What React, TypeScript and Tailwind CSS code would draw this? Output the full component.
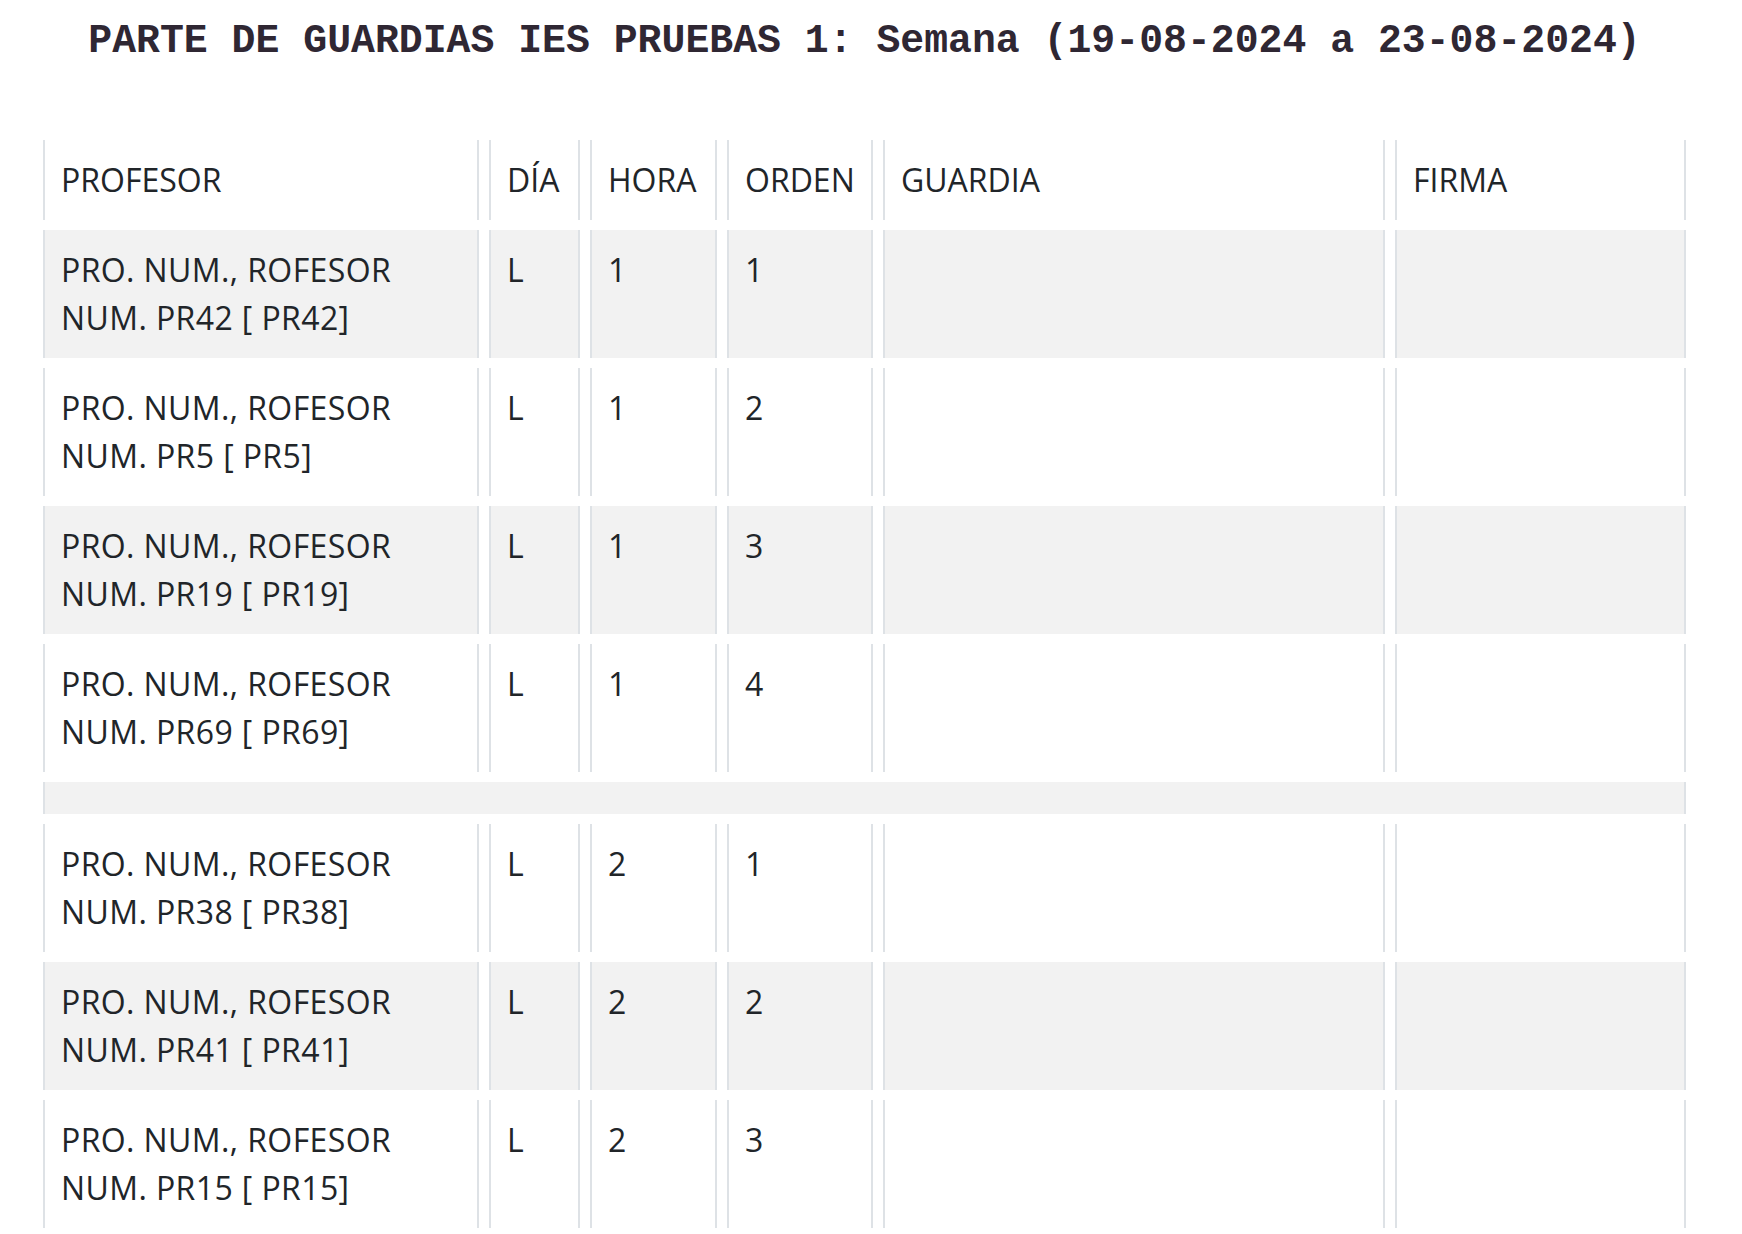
const rows = [
  { profesor: 'PRO. NUM., ROFESOR NUM. PR42 [ PR42]', dia: 'L', hora: '1', orden: '1' },
  { profesor: 'PRO. NUM., ROFESOR NUM. PR5 [ PR5]', dia: 'L', hora: '1', orden: '2' },
  { profesor: 'PRO. NUM., ROFESOR NUM. PR19 [ PR19]', dia: 'L', hora: '1', orden: '3' },
  { profesor: 'PRO. NUM., ROFESOR NUM. PR69 [ PR69]', dia: 'L', hora: '1', orden: '4' },
  null,
  { profesor: 'PRO. NUM., ROFESOR NUM. PR38 [ PR38]', dia: 'L', hora: '2', orden: '1' },
  { profesor: 'PRO. NUM., ROFESOR NUM. PR41 [ PR41]', dia: 'L', hora: '2', orden: '2' },
  { profesor: 'PRO. NUM., ROFESOR NUM. PR15 [ PR15]', dia: 'L', hora: '2', orden: '3' },
  { profesor: 'PRO. NUM., ROFESOR NUM. PR27 [ PR27]', dia: 'L', hora: '2', orden: '4' },
];

const cell = 'border-x-2 border-[#dee2e6] px-4 py-4';

export default function App() {
  return (
    <div className="min-h-screen bg-white text-[#212529] [font-family:'Open_Sans',sans-serif]">
      {/* Title */}
      <h1 className="ml-[43px] w-[1643px] pt-[18px] text-center text-[39.8px] font-bold leading-[48px] text-[#2f2733] [font-family:'Liberation_Mono',monospace]">
        PARTE DE GUARDIAS IES PRUEBAS 1: Semana (19-08-2024 a 23-08-2024)
      </h1>

      {/* Parte table */}
      <div className="ml-[43px] mt-[74px] grid grid-cols-[436px_91px_127px_146px_502px_291px] gap-[10px] text-[32px] leading-[48px]">
        <div className={cell}>PROFESOR</div>
        <div className={cell}>DÍA</div>
        <div className={cell}>HORA</div>
        <div className={cell}>ORDEN</div>
        <div className={cell}>GUARDIA</div>
        <div className={cell}>FIRMA</div>

        {rows.map((r, i) => {
          const bg = i % 2 === 0 ? 'bg-[#f2f2f2]' : 'bg-white';
          if (!r) {
            return <div key={i} className={`col-span-6 h-[32px] border-x-2 border-[#dee2e6] ${bg}`} />;
          }
          return [
            <div key={`${i}-p`} className={`${cell} ${bg} tracking-[0.4px]`}>{r.profesor}</div>,
            <div key={`${i}-d`} className={`${cell} ${bg}`}>{r.dia}</div>,
            <div key={`${i}-h`} className={`${cell} ${bg}`}>{r.hora}</div>,
            <div key={`${i}-o`} className={`${cell} ${bg}`}>{r.orden}</div>,
            <div key={`${i}-g`} className={`${cell} ${bg}`}></div>,
            <div key={`${i}-f`} className={`${cell} ${bg}`}></div>,
          ];
        })}
      </div>
    </div>
  );
}
